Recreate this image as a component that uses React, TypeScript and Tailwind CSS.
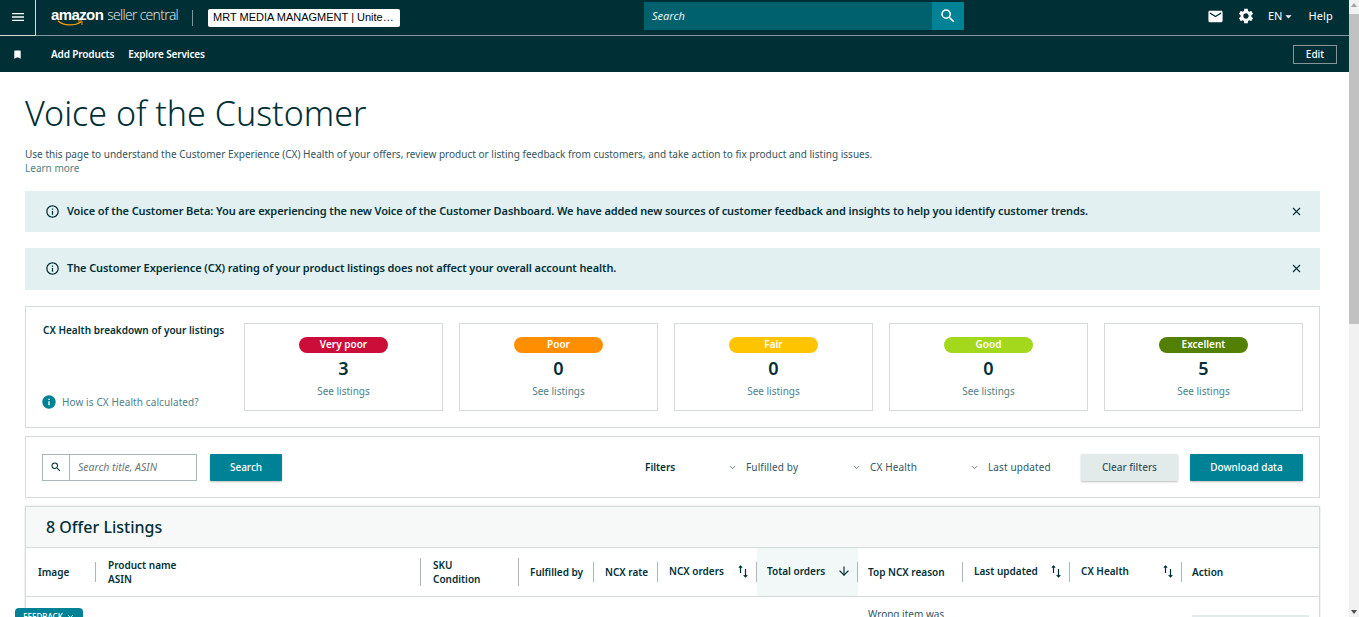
import { ArrowDown, ChevronDown, X } from "lucide-react";
import { MdArrowDropDown, MdBookmark, MdEmail, MdInfo, MdMenu, MdOutlineInfo, MdSearch, MdSettings } from "react-icons/md";

const SortIcon = () => (
    <svg width="10" height="13" viewBox="0 0 10 13" className="text-[#002f36]" fill="none" stroke="currentColor" strokeWidth="1.2">
        <path d="M2.5 8V1M0.9 2.6 2.5 1l1.6 1.6" />
        <path d="M7.5 4v8M5.7 10.2 7.5 12l1.8-1.8" />
    </svg>
);

const Alert = ({ text, className }: { text: string; className: string }) => (
    <div className={"flex items-center bg-[#e3f0f1] pl-[20px] pr-[17px] " + className}>
        <MdOutlineInfo className="text-[#002f36] text-[15px] mr-[7px]" />
        <span className="text-[11px] font-semibold tracking-[-0.1px] text-[#002f36] grow">{text}</span>
        <X size={13} className="text-[#002f36]" />
    </div>
);

const HealthCard = ({ label, count, pill, textColor }: { label: string; count: number; pill: string; textColor: string }) => (
    <div className="w-[199px] h-[88px] border border-[#d5dbdb] flex flex-col items-center pt-[13px]">
        <div className={"w-[89px] h-4 rounded-full flex items-center justify-center text-[10px] font-semibold pb-px " + pill + " " + textColor}>{label}</div>
        <div className="text-[18px] font-semibold leading-[24px] mt-[3px] text-[#002f36]">{count}</div>
        <a className="text-[10px] text-[#4d7f8a] mt-[4px]">See listings</a>
    </div>
);

const FilterSelect = ({ label, className }: { label: string; className: string }) => (
    <div className={"flex items-center text-[10px] tracking-[0.13px] text-[#33555e] " + className}>
        <ChevronDown size={9} className="mr-[9px] text-[#33555e]" />
        {label}
    </div>
);

const Th = ({ children, className = "" }: { children: React.ReactNode; className?: string }) => (
    <div className={"flex items-center text-[10px] font-semibold text-[#002f36] " + className}>{children}</div>
);

const Divider = ({ h = "h-5" }: { h?: string }) => <span className={"w-px bg-[#aab7b8] shrink-0 " + h}></span>;

export default function App() {
    return (
        <div className="relative flex h-[617px] w-[1359px] overflow-hidden bg-white font-['Noto_Sans',sans-serif] text-[#002f36]">
            <div className="w-[1349px] shrink-0">
                {/* top bar */}
                <header className="h-9 bg-[#002f36] border-b border-[#7f9a9e] flex items-center text-white">
                    <div className="w-[644px] flex items-center h-full shrink-0">
                        <div className="w-[36px] h-[36px] border-r border-b border-[#d5dbdb] flex items-center justify-center shrink-0">
                            <MdMenu className="text-[16px]" />
                        </div>
                        <div className="relative ml-[15px] w-[141px] flex items-center font-['Liberation_Sans',sans-serif] -mt-[5px] shrink-0">
                            <span className="font-bold text-[15px] tracking-[-0.6px] leading-5">amazon</span>
                            <span className="text-[14px] ml-1 font-['Open_Sans',sans-serif] font-light tracking-[-0.7px] leading-5 text-[#e8eeee]">seller central</span>
                            <svg width="28" height="7" viewBox="0 0 28 7" className="absolute left-[6px] top-[15px]" fill="none">
                                <path d="M1 1c6 5 17 5 23 1" stroke="#f90" strokeWidth="1.3" />
                                <path d="M21 1h4v4" stroke="#f90" strokeWidth="1" />
                            </svg>
                        </div>
                        <span className="w-px h-4 bg-[#7f9a9e] shrink-0"></span>
                        <div className="ml-[15px] w-[192px] h-[18px] bg-white rounded-[2px] text-black text-[11px] font-['Liberation_Sans',sans-serif] flex items-center pl-[5px] whitespace-nowrap shrink-0">
                            MRT MEDIA MANAGMENT | Unite…
                        </div>
                    </div>
                    <div className="w-[320px] h-[28px] -mt-[3px] flex shrink-0">
                        <div className="w-[288px] bg-[#00616e] text-[11px] italic flex items-center pl-2 text-[#e6f2f3]">Search</div>
                        <div className="w-8 bg-[#008296] flex items-center justify-center">
                            <MdSearch className="text-[18px]" />
                        </div>
                    </div>
                    <div className="grow flex items-center pl-[243px] -mt-[3px] text-[11px]">
                        <MdEmail className="text-[17px]" />
                        <MdSettings className="text-[18px] ml-[13px]" />
                        <span className="ml-[13px]">EN</span>
                        <MdArrowDropDown className="text-[15px] -ml-px" />
                        <span className="ml-[12px] tracking-[0.1px]">Help</span>
                    </div>
                </header>
                {/* saved links bar */}
                <nav className="h-9 bg-[#002f36] flex items-center text-white text-[10px] font-semibold tracking-[-0.14px] pl-[13px] pr-[12px]">
                    <MdBookmark className="text-[11px] w-[11px] -ml-[1px]" />
                    <a className="ml-[28px]">Add Products</a>
                    <a className="ml-[14px]">Explore Services</a>
                    <button className="ml-auto w-[44px] h-[19px] border border-[#879596] text-[10px] font-medium tracking-normal text-white mt-[1px]">Edit</button>
                </nav>
                <main className="pl-[25px] pr-[29px]">
                    <h1 className="text-[34px] font-light leading-[48px] mt-[17px] text-[#002f36]">Voice of the Customer</h1>
                    <p className="text-[10px] tracking-[0.012px] leading-[14px] mt-[10px] text-[#33555e]">
                        Use this page to understand the Customer Experience (CX) Health of your offers, review product or listing feedback from customers, and take action to fix product and listing issues.
                    </p>
                    <a className="block text-[10px] leading-[14px] text-[#4d7f8a]">Learn more</a>
                    <Alert className="h-[41px] mt-4" text="Voice of the Customer Beta: You are experiencing the new Voice of the Customer Dashboard. We have added new sources of customer feedback and insights to help you identify customer trends." />
                    <Alert className="h-[42px] mt-4 pb-px" text="The Customer Experience (CX) rating of your product listings does not affect your overall account health." />

                    {/* cx health */}
                    <section className="h-[122px] mt-4 border border-[#d5dbdb] flex pl-[16px] pr-4 pt-4">
                        <div className="w-[202px] h-[88px] flex flex-col justify-between shrink-0">
                            <div className="text-[10px] font-semibold leading-[14px] tracking-[0.02px] pl-px">CX Health breakdown of your listings</div>
                            <a className="flex items-center text-[10px] tracking-[0.1px] text-[#4d7f8a] mb-[1px]">
                                <MdInfo className="text-[16px] text-[#008296] mr-[5px] -ml-[1px]" />
                                How is CX Health calculated?
                            </a>
                        </div>
                        <div className="flex gap-4">
                            <HealthCard label="Very poor" count={3} pill="bg-[#cc0c39]" textColor="text-white" />
                            <HealthCard label="Poor" count={0} pill="bg-[#ff8f00]" textColor="text-white" />
                            <HealthCard label="Fair" count={0} pill="bg-[#ffc400]" textColor="text-white" />
                            <HealthCard label="Good" count={0} pill="bg-[#a4d81c]" textColor="text-white" />
                            <HealthCard label="Excellent" count={5} pill="bg-[#538000]" textColor="text-white" />
                        </div>
                    </section>

                    {/* filters */}
                    <section className="h-[62px] mt-2 border border-[#d5dbdb] flex items-center pl-4 pr-4">
                        <div className="w-[155px] h-[27px] border border-[#aab7b8] flex items-center">
                            <div className="w-[27px] h-full border-r border-[#aab7b8] flex items-center justify-center shrink-0">
                                <MdSearch className="text-[12px]" />
                            </div>
                            <span className="pl-2 pt-px text-[10.5px] italic text-[#6c7778]">Search title, ASIN</span>
                        </div>
                        <button className="ml-[13px] w-[72px] h-[27px] bg-[#008296] text-white text-[10px] font-medium rounded-[1px] shadow-[0_1px_2px_rgba(0,0,0,0.25)]">Search</button>
                        <span className="ml-[363px] w-[83px] text-[10px] font-semibold">Filters</span>
                        <FilterSelect label="Fulfilled by" className="w-[124px]" />
                        <FilterSelect label="CX Health" className="w-[118px]" />
                        <FilterSelect label="Last updated" className="w-[111px]" />
                        <button className="w-[97px] h-[27px] bg-[#e3eaea] text-[#33555e] text-[10px] font-medium rounded-[1px] shadow-[0_1px_2px_rgba(0,0,0,0.25)] shrink-0">Clear filters</button>
                        <button className="ml-3 w-[113px] h-[27px] bg-[#008296] text-white text-[10px] font-medium rounded-[1px] shadow-[0_1px_2px_rgba(0,0,0,0.25)] shrink-0">Download data</button>
                    </section>

                    {/* listings table */}
                    <section className="mt-2 border-x border-t border-[#d5dbdb] shadow-[0_0_2px_rgba(0,0,0,0.15)]">
                        <div className="h-[41px] bg-[#f7f8f8] border-b border-[#d5dbdb] flex items-center pl-5 text-[16px] font-medium">8 Offer Listings</div>
                        <div className="h-[49px] border-b border-[#d5dbdb] grid grid-cols-[70px_325px_98px_75px_64px_99px_101px_105px_107px_112px_1fr]">
                            <Th className="justify-between pl-3"><span>Image</span><Divider /></Th>
                            <Th className="justify-between pl-3">
                                <span className="leading-[14px]">Product name<br />ASIN</span><Divider h="h-7" />
                            </Th>
                            <Th className="justify-between pl-3">
                                <span className="leading-[14px]">SKU<br />Condition</span><Divider h="h-7" />
                            </Th>
                            <Th className="justify-between pl-[11px] whitespace-nowrap"><span>Fulfilled by</span><Divider /></Th>
                            <Th className="justify-between pl-[11px] whitespace-nowrap"><span>NCX rate</span><Divider /></Th>
                            <Th className="pl-[11px] whitespace-nowrap"><span className="-mt-[2px]">NCX orders</span><span className="ml-auto mr-[8px] -mt-[2px]"><SortIcon /></span><Divider /></Th>
                            <Th className="bg-[#f2f7f7] pl-[10px] whitespace-nowrap">
                                <span className="-mt-[2px]">Total orders</span>
                                <ArrowDown size={14} className="ml-auto mr-[6px] -mt-[2px]" />
                                <Divider />
                            </Th>
                            <Th className="justify-between pl-[10px] whitespace-nowrap"><span>Top NCX reason</span><Divider /></Th>
                            <Th className="pl-[11px] whitespace-nowrap"><span className="-mt-[2px]">Last updated</span><span className="ml-auto mr-2 -mt-[2px]"><SortIcon /></span><Divider /></Th>
                            <Th className="pl-[11px] whitespace-nowrap"><span className="-mt-[2px]">CX Health</span><span className="ml-auto mr-2 -mt-[2px]"><SortIcon /></span><Divider /></Th>
                            <Th className="pl-[10px]">Action</Th>
                        </div>
                        <div className="grid grid-cols-[70px_325px_98px_75px_64px_99px_101px_105px_107px_112px_1fr] h-10">
                            <div className="col-start-8 pl-[10px] pt-[10px] text-[10px] leading-[14px] text-[#33555e]">Wrong item was</div>
                            <div className="col-start-11 pl-[10px] pt-[18px]">
                                <div className="w-[117px] h-[27px] bg-[#e3eaea] rounded-[1px]"></div>
                            </div>
                        </div>
                    </section>
                </main>
            </div>
            {/* browser scrollbar */}
            <div className="relative w-[10px] bg-[#f1f1f1] flex flex-col items-center">
                <svg width="8" height="6" viewBox="0 0 8 6" className="mt-[2px] shrink-0"><path d="M4 1 7 5H1z" fill="#a3a3a3" /></svg>
                <div className="w-full h-[310px] bg-[#c1c1c1] mt-[6px]"></div>
                <svg width="8" height="6" viewBox="0 0 8 6" className="mt-auto mb-[2px] shrink-0"><path d="M4 5 1 1h6z" fill="#505050" /></svg>
            </div>
            {/* feedback tab */}
            <div className="absolute left-[15px] top-[608px] w-[68px] h-[20px] bg-[#008296] rounded-t-[4px] flex items-start justify-center gap-[3px] pt-[3px] text-[8px] font-medium text-white">
                FEEDBACK <X size={9} className="mt-[2px]" />
            </div>
        </div>
    );
}
